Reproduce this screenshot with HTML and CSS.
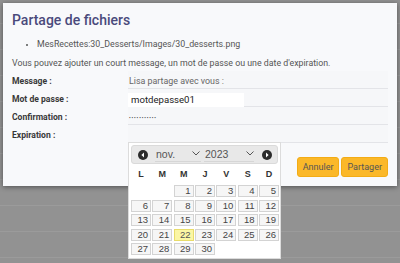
FILE: index.html
```html
<!DOCTYPE html>
<html lang="fr">
<head>
<meta charset="utf-8">
<title>Partage de fichiers</title>
<link rel="stylesheet" href="styles.css">
</head>
<body>
<div class="backdrop">
  <div class="bg-row first"></div>
  <div class="bg-row"></div><div class="bg-row"></div><div class="bg-row"></div>
  <div class="bg-row"></div><div class="bg-row"></div><div class="bg-row"></div>
  <div class="bg-row"></div><div class="bg-row"></div><div class="bg-row"></div>
</div>

<div class="dialog">
  <h1 class="title">Partage de fichiers</h1>
  <ul class="files">
    <li>MesRecettes:30_Desserts/Images/30_desserts.png</li>
  </ul>
  <p class="intro">Vous pouvez ajouter un court message, un mot de passe ou une date d'expiration.</p>
  <div class="form">
    <div class="label">Message :</div>
    <div class="field"><span class="placeholder">Lisa partage avec vous :</span></div>
    <div class="label">Mot de passe :</div>
    <div class="field"><span class="autofill">motdepasse01</span></div>
    <div class="label">Confirmation :</div>
    <div class="field"><span class="dots">•••••••••••</span></div>
    <div class="label">Expiration :</div>
    <div class="field"></div>
  </div>
  <div class="actions">
    <button class="btn">Annuler</button>
    <button class="btn">Partager</button>
  </div>
</div>

<div class="datepicker">
  <div class="dp-header">
    <svg class="dp-nav" width="10" height="10" viewBox="0 0 10 10"><circle cx="5" cy="5" r="5" fill="#2b2b2b"/><path d="M6 2.6 L3.4 5 L6 7.4 Z" fill="#fff"/></svg>
    <div class="dp-select month"><span>nov.</span><svg width="8" height="5" viewBox="0 0 8 5"><path d="M0.5 0.5 L4 4 L7.5 0.5" fill="none" stroke="#555" stroke-width="1"/></svg></div>
    <div class="dp-select year"><span>2023</span><svg width="8" height="5" viewBox="0 0 8 5"><path d="M0.5 0.5 L4 4 L7.5 0.5" fill="none" stroke="#555" stroke-width="1"/></svg></div>
    <svg class="dp-nav" width="10" height="10" viewBox="0 0 10 10"><circle cx="5" cy="5" r="5" fill="#2b2b2b"/><path d="M4 2.6 L6.6 5 L4 7.4 Z" fill="#fff"/></svg>
  </div>
  <div class="dp-days">
    <span>L</span><span>M</span><span>M</span><span>J</span><span>V</span><span>S</span><span>D</span>
  </div>
  <div class="dp-grid">
    <span class="empty"></span><span class="empty"></span>
    <span class="day">1</span><span class="day">2</span><span class="day">3</span><span class="day">4</span><span class="day">5</span>
    <span class="day">6</span><span class="day">7</span><span class="day">8</span><span class="day">9</span><span class="day">10</span><span class="day">11</span><span class="day">12</span>
    <span class="day">13</span><span class="day">14</span><span class="day">15</span><span class="day">16</span><span class="day">17</span><span class="day">18</span><span class="day">19</span>
    <span class="day">20</span><span class="day">21</span><span class="day today">22</span><span class="day">23</span><span class="day">24</span><span class="day">25</span><span class="day">26</span>
    <span class="day">27</span><span class="day">28</span><span class="day">29</span><span class="day">30</span>
  </div>
</div>
</body>
</html>
```

FILE: styles.css
```css
* { box-sizing: border-box; }
html, body { margin: 0; padding: 0; }
body {
  width: 400px;
  height: 263px;
  overflow: hidden;
  background: #929292;
  font-family: Roboto, "Liberation Sans", sans-serif;
  position: relative;
}

.backdrop { display: flex; flex-direction: column; }
.bg-row { height: 26px; border-bottom: 1px solid #9b9b9b; }
.bg-row.first { height: 24px; }

.dialog {
  position: absolute;
  left: 3px;
  top: 3px;
  width: 394px;
  height: 183px;
  background: #f8f9fb;
  box-shadow: 0 1px 5px rgba(0, 0, 0, 0.45);
  padding: 7px 9px 0 9px;
  display: flex;
  flex-direction: column;
}

.title {
  margin: 0;
  font-size: 14px;
  line-height: 20px;
  font-weight: 500;
  color: #4a4a7b;
}

.files {
  margin: 7px 0 0 0;
  padding-left: 25px;
  font-size: 8.8px;
  line-height: 14px;
  color: #555;
}
.files li::marker { font-size: 8px; }

.intro {
  margin: 5px 0 0 0;
  font-size: 8.8px;
  line-height: 14px;
  color: #555;
}

.form {
  margin-top: 1px;
  display: grid;
  grid-template-columns: 116px 1fr;
  grid-auto-rows: 18px;
}
.label {
  font-size: 8.6px;
  font-weight: 700;
  color: #383838;
  padding-top: 3px;
  line-height: 14px;
}
.field {
  border-bottom: 1px solid #e3e4e8;
  background: #f6f7f9;
  padding-top: 3px;
  line-height: 14px;
  font-size: 8.9px;
}
.placeholder { color: #666; padding-left: 1px; }
.autofill {
  display: inline-block;
  width: 116px;
  height: 14px;
  margin-top: 1px;
  line-height: 14px;
  background: #fff;
  font-size: 9.6px;
  color: #222;
  padding-left: 3px;
}
.dots {
  font-size: 5px;
  letter-spacing: 0.85px;
  color: #333;
  vertical-align: middle;
  padding-left: 1px;
}

.actions {
  margin-top: 14px;
  display: flex;
  justify-content: flex-end;
  gap: 2px;
}
.btn {
  height: 20px;
  padding: 0 5px;
  border: 1px solid #f3ac15;
  border-radius: 3px;
  background: #fbb829;
  color: #555;
  font-family: Roboto, sans-serif;
  font-size: 9px;
}

.datepicker {
  position: absolute;
  left: 128px;
  top: 142px;
  width: 153px;
  height: 117px;
  background: #fff;
  border: 1px solid #dcdcdc;
  padding: 2px;
  font-family: "Liberation Sans", Arial, sans-serif;
}
.dp-header {
  height: 19px;
  background: #e8e8e8;
  border: 1px solid #dadada;
  border-radius: 3px;
  display: flex;
  align-items: center;
  padding: 0 2px 0 6px;
}
.dp-nav { flex: none; }
.dp-select {
  display: flex;
  align-items: center;
  justify-content: space-between;
  border-bottom: 1px solid #d6d6d6;
  font-size: 10.5px;
  color: #555;
  height: 14px;
}
.dp-select svg { margin-bottom: 1px; }
.month { width: 46px; margin-left: 7px; padding-left: 1px; padding-right: 1px; }
.year { width: 50px; margin-left: 3px; margin-right: 8px; padding-left: 1px; }

.dp-days {
  display: grid;
  grid-template-columns: repeat(7, 20px);
  column-gap: 1.33px;
  height: 20px;
  align-items: center;
  font-size: 9px;
  font-weight: 700;
  color: #333;
  text-align: center;
}
.dp-grid {
  display: grid;
  grid-template-columns: repeat(7, 20px);
  grid-auto-rows: 12px;
  column-gap: 1.33px;
  row-gap: 2.5px;
  margin-top: 1px;
}
.day {
  background: #f6f6f6;
  border: 1px solid #d3d3d3;
  font-size: 9.5px;
  line-height: 10px;
  color: #454545;
  text-align: right;
  padding-right: 2px;
}
.day.today {
  background: #fbf6a4;
  border-color: #e8dc6a;
  color: #555;
}
```
